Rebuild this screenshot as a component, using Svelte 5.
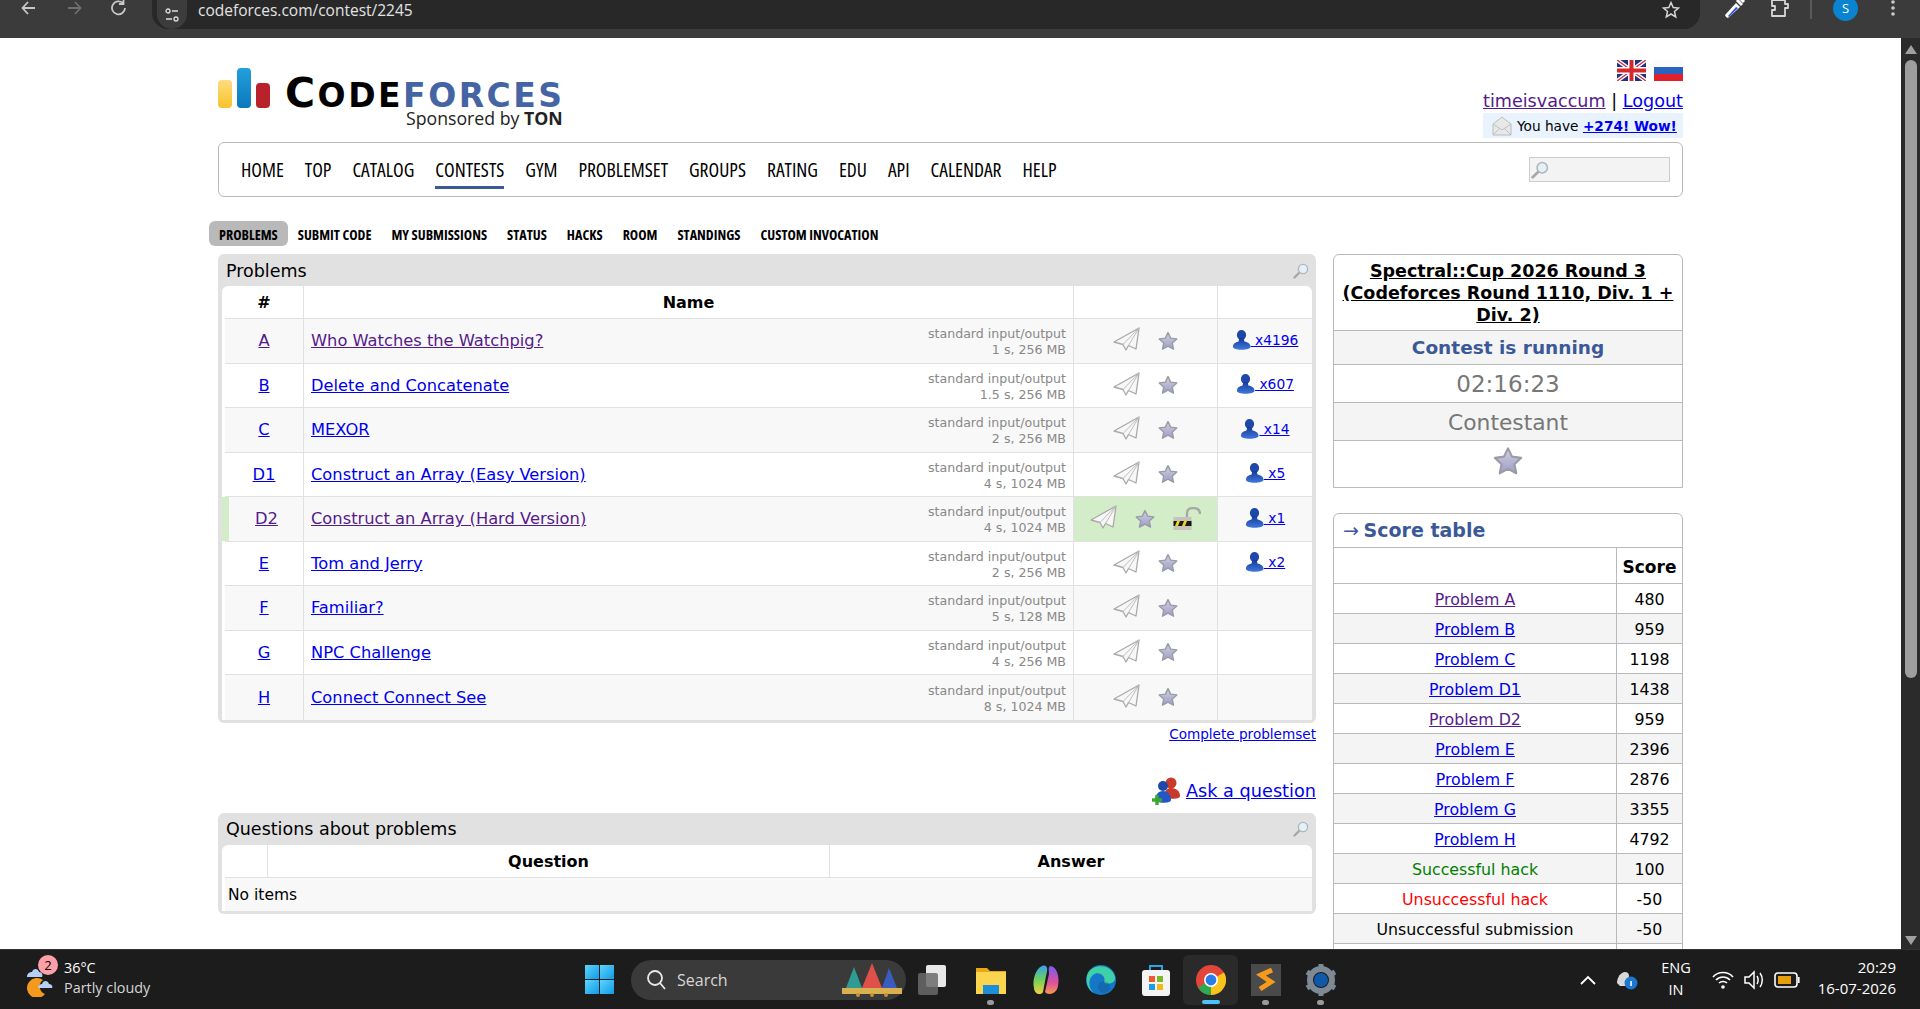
<script>
	const menu = ['HOME', 'TOP', 'CATALOG', 'CONTESTS', 'GYM', 'PROBLEMSET', 'GROUPS', 'RATING', 'EDU', 'API', 'CALENDAR', 'HELP'];
	const tabs = ['PROBLEMS', 'SUBMIT CODE', 'MY SUBMISSIONS', 'STATUS', 'HACKS', 'ROOM', 'STANDINGS', 'CUSTOM INVOCATION'];
	const problems = [
		{ id: 'A', name: 'Who Watches the Watchpig?', limits: '1 s, 256 MB', solved: 'x4196', visited: true },
		{ id: 'B', name: 'Delete and Concatenate', limits: '1.5 s, 256 MB', solved: 'x607' },
		{ id: 'C', name: 'MEXOR', limits: '2 s, 256 MB', solved: 'x14' },
		{ id: 'D1', name: 'Construct an Array (Easy Version)', limits: '4 s, 1024 MB', solved: 'x5' },
		{ id: 'D2', name: 'Construct an Array (Hard Version)', limits: '4 s, 1024 MB', solved: 'x1', visited: true, accepted: true },
		{ id: 'E', name: 'Tom and Jerry', limits: '2 s, 256 MB', solved: 'x2' },
		{ id: 'F', name: 'Familiar?', limits: '5 s, 128 MB' },
		{ id: 'G', name: 'NPC Challenge', limits: '4 s, 256 MB' },
		{ id: 'H', name: 'Connect Connect See', limits: '8 s, 1024 MB' }
	];
	const scores = [
		{ label: 'Problem A', score: 480, visited: true },
		{ label: 'Problem B', score: 959 },
		{ label: 'Problem C', score: 1198 },
		{ label: 'Problem D1', score: 1438 },
		{ label: 'Problem D2', score: 959, visited: true },
		{ label: 'Problem E', score: 2396 },
		{ label: 'Problem F', score: 2876 },
		{ label: 'Problem G', score: 3355 },
		{ label: 'Problem H', score: 4792 },
		{ label: 'Successful hack', score: 100, kind: 'good' },
		{ label: 'Unsuccessful hack', score: -50, kind: 'bad' },
		{ label: 'Unsuccessful submission', score: -50, kind: 'plain' },
		{ label: '', score: '', kind: 'plain' }
	];
</script>

{#snippet star(size)}
	<svg width={size} height={size} viewBox="0 0 20 20">
		<polygon points="10,1.6 12.7,7.1 18.8,7.9 14.3,12.1 15.5,18.2 10,15.2 4.5,18.2 5.7,12.1 1.2,7.9 7.3,7.1" fill="url(#starFill)" stroke="#9a9aa8" stroke-width="1.4" stroke-linejoin="round" />
	</svg>
{/snippet}

{#snippet plane()}
	<svg class="plane" width="27" height="24" viewBox="0 0 27 24">
		<path d="M26 1 L1 15 L10 17.5 L13 23 L15.5 18.5 L23 22 Z" fill="#f7f7f7" stroke="#a9a9a9" stroke-width="1.3" stroke-linejoin="round" />
		<path d="M26 1 L10 17.5 M26 1 L15.5 18.5" fill="none" stroke="#bdbdbd" />
	</svg>
{/snippet}

{#snippet person()}
	<svg width="19" height="20" viewBox="0 0 19 20">
		<ellipse cx="9.5" cy="5" rx="4.6" ry="5" fill="#1d47a8" />
		<path d="M7.2 8 h4.600 l.6 3.600 c3.600 .6 6.100 2.500 6.100 5.200 c0 2 -4 3 -8.800 3 S.9 18.800 .9 16.800 c0 -2.700 2.300 -4.600 5.700 -5.200 z" fill="url(#personFill)" />
	</svg>
{/snippet}

{#snippet lock()}
	<svg width="28" height="24" viewBox="0 0 28 24">
		<path d="M14 12 V6 C14 2 17 1 20 1 C24 1 27 3 27 7" fill="none" stroke="#a8a8a8" stroke-width="2.400" />
		<rect x="0.500" y="10" width="18" height="13" fill="#c4c4bc" />
		<rect x="0.500" y="14" width="18" height="5" fill="#1a1a10" />
		<path d="M2 19 l2 -5 h3 l-2 5 z M9 19 l2 -5 h3 l-2 5 z" fill="#f0d020" />
	</svg>
{/snippet}

{#snippet glass(size)}
	<svg width={size} height={size} viewBox="0 0 16 16">
		<path d="M6.500 9.500 L1.500 14.500" stroke="#a8a8a8" stroke-width="2.400" stroke-linecap="round" />
		<circle cx="10" cy="6" r="4.600" fill="#e4f1f8" stroke="#b0b8bc" stroke-width="1.400" />
	</svg>
{/snippet}

<svg class="defs" width="0" height="0" aria-hidden="true">
	<defs>
		<linearGradient id="starFill" x1="0" y1="0" x2="0" y2="1">
			<stop offset="0" stop-color="#d2d2de" />
			<stop offset="1" stop-color="#9c9cc8" />
		</linearGradient>
		<linearGradient id="personFill" x1="0" y1="0" x2="0" y2="1">
			<stop offset="0" stop-color="#163a98" />
			<stop offset="1" stop-color="#3f78de" />
		</linearGradient>
		<linearGradient id="winFill" x1="0" y1="0" x2="1" y2="1">
			<stop offset="0" stop-color="#5fd4fb" />
			<stop offset="1" stop-color="#0f9be8" />
		</linearGradient>
	</defs>
</svg>

<div class="screen">
	<div class="browser-bar">
		<div class="nav-buttons">
			<svg width="20" height="20" viewBox="0 0 20 20"><path d="M16 10 H4 M9 4 L3.500 10 L9 16" fill="none" stroke="#c7c7c7" stroke-width="1.800" /></svg>
			<svg width="20" height="20" viewBox="0 0 20 20"><path d="M4 10 H16 M11 4 L16.500 10 L11 16" fill="none" stroke="#6f6f6f" stroke-width="1.800" /></svg>
			<svg width="20" height="20" viewBox="0 0 20 20"><path d="M16 10 A6.500 6.500 0 1 1 13.800 5 M14.500 1.500 V6 H10" fill="none" stroke="#c7c7c7" stroke-width="1.800" /></svg>
		</div>
		<div class="omnibox">
			<span class="site-info">
				<svg width="16" height="16" viewBox="0 0 16 16"><circle cx="4" cy="4" r="2" fill="none" stroke="#ddd" stroke-width="1.300" /><path d="M8 4 H14 M2 12 H8" stroke="#ddd" stroke-width="1.400" /><circle cx="12" cy="12" r="2" fill="none" stroke="#ddd" stroke-width="1.300" /></svg>
			</span>
			<span class="url">codeforces.com/contest/2245</span>
			<svg class="bookmark" width="20" height="20" viewBox="0 0 20 20"><polygon points="10,2.500 12.200,7.500 17.500,8 13.500,11.500 14.700,17 10,14 5.300,17 6.500,11.500 2.500,8 7.800,7.500" fill="none" stroke="#d5d5d5" stroke-width="1.500" /></svg>
		</div>
		<div class="extensions">
			<svg width="24" height="24" viewBox="0 0 24 24"><path d="M4 21 L3 19 L14 7 L18 11 L6 22 Z" fill="#fff" /><path d="M6 20 L14 11 L16 12 L7 21 Z" fill="#2f55d4" /><path d="M15 4 L20 9 M18 2 L22 6" stroke="#fff" stroke-width="3" /></svg>
			<svg width="22" height="22" viewBox="0 0 22 22"><path d="M3 3 H16 V7 H19 V11 H16 V19 H3 V13 H6 V9 H3 Z" fill="none" stroke="#d5d5d5" stroke-width="1.800" stroke-linejoin="round" /></svg>
			<span class="bar-sep"></span>
			<span class="avatar">S</span>
			<svg width="6" height="20" viewBox="0 0 6 20"><circle cx="3" cy="4" r="1.800" fill="#ccc" /><circle cx="3" cy="10" r="1.800" fill="#ccc" /><circle cx="3" cy="16" r="1.800" fill="#ccc" /></svg>
		</div>
	</div>

	<div class="viewport">
		<div class="page">
			<header class="header">
				<div class="logo">
					<div class="logo-bars">
						<span class="bar-yellow"></span>
						<span class="bar-blue"></span>
						<span class="bar-red"></span>
					</div>
					<div class="logo-text">
						<div class="logo-name"><b class="big">C</b><b>ODE</b><b class="forces">FORCES</b></div>
						<div class="logo-sub">Sponsored by <b>TON</b></div>
					</div>
				</div>
				<div class="lang-info">
					<div class="flags">
						<svg width="29" height="21" viewBox="0 0 29 21">
							<rect width="29" height="21" fill="#26307c" />
							<path d="M0 0 L29 21 M29 0 L0 21" stroke="#fff" stroke-width="4" />
							<path d="M0 0 L29 21 M29 0 L0 21" stroke="#c9354a" stroke-width="1.400" />
							<path d="M14.500 0 V21 M0 10.500 H29" stroke="#fff" stroke-width="7" />
							<path d="M14.500 0 V21 M0 10.500 H29" stroke="#d8262e" stroke-width="4" />
						</svg>
						<svg width="29" height="21" viewBox="0 0 29 21">
							<rect width="29" height="7" fill="#fbfbfb" />
							<rect y="7" width="29" height="7" fill="#2a62c0" />
							<rect y="14" width="29" height="7" fill="#e0202a" />
						</svg>
					</div>
					<div class="user-links"><a class="visited" href="#top">timeisvaccum</a> | <a href="#top">Logout</a></div>
					<div class="talk">
						<svg width="20" height="20" viewBox="0 0 20 20"><path d="M1 8 L10 1 L19 8 V19 H1 Z" fill="#e8e8e8" stroke="#bbb" /><path d="M1 8 L10 14 L19 8 M1 19 L8 12 M19 19 L12 12" fill="none" stroke="#c0c0c0" /></svg>
						<span>You have <a href="#top"><b>+274! Wow!</b></a></span>
					</div>
				</div>
			</header>

			<nav class="menu">
				<div class="menu-items">
					{#each menu as item}
						<span class="menu-item" class:current={item === 'CONTESTS'}>{item}</span>
					{/each}
				</div>
				<div class="search">{@render glass(18)}</div>
			</nav>

			<div class="tabs">
				{#each tabs as tab, i}
					<span class="tab" class:active={i === 0}>{tab}</span>
				{/each}
			</div>

			<div class="columns">
				<main class="left">
					<section class="datatable">
						<div class="caption"><span>Problems</span>{@render glass(16)}</div>
						<div class="inner">
							<div class="row head">
								<div class="cell center">#</div>
								<div class="cell center">Name</div>
								<div class="cell"></div>
								<div class="cell last"></div>
							</div>
							{#each problems as p, i}
								<div class="row" class:odd={i % 2 === 0}>
									<div class="cell center index" class:accepted={p.accepted}>
										<a class:visited={p.visited} href="#top">{p.id}</a>
									</div>
									<div class="cell name">
										<a class:visited={p.visited} href="#top">{p.name}</a>
										<div class="limits">standard input/output<br />{p.limits}</div>
									</div>
									<div class="cell actions" class:accepted-cell={p.accepted}>
										{@render plane()}
										{@render star(20)}
										{#if p.accepted}
											{@render lock()}
										{/if}
									</div>
									<div class="cell last solved">
										{#if p.solved}
											{@render person()}<a href="#top">&nbsp;{p.solved}</a>
										{/if}
									</div>
								</div>
							{/each}
						</div>
					</section>

					<div class="complete"><a href="#top">Complete problemset</a></div>

					<div class="ask">
						<svg width="30" height="30" viewBox="0 0 30 30">
							<circle cx="20" cy="7" r="5.500" fill="#c83a2a" />
							<path d="M13 21 C13 14 17 12 20 12 C25 12 29 15 29 20 C29 23 22 24 13 21 Z" fill="#c83a2a" />
							<circle cx="12" cy="10" r="5" fill="#1d47a8" />
							<path d="M4 25 C4 18 8 15 12 15 C17 15 20 19 20 24 C20 27 10 28 4 25 Z" fill="#2456c4" />
							<path d="M6 19 V29 M1 24 H11" stroke="#3aa82e" stroke-width="3.400" />
						</svg>
						<a href="#top">Ask a question</a>
					</div>

					<section class="datatable questions">
						<div class="caption"><span>Questions about problems</span>{@render glass(16)}</div>
						<div class="inner">
							<div class="row head qrow">
								<div class="cell"></div>
								<div class="cell center">Question</div>
								<div class="cell center last">Answer</div>
							</div>
							<div class="row odd empty"><div class="cell">No items</div></div>
						</div>
					</section>
				</main>

				<aside class="side">
					<div class="round-box">
						<div class="info-title"><a href="#top">Spectral::Cup 2026 Round 3 (Codeforces Round 1110, Div. 1 + Div. 2)</a></div>
						<div class="info-row shaded status">Contest is running</div>
						<div class="info-row grey timer">02:16:23</div>
						<div class="info-row shaded grey role">Contestant</div>
						<div class="info-row star-row">{@render star(30)}</div>
					</div>

					<div class="round-box score-box">
						<div class="score-caption"><span class="arrow">→</span> Score table</div>
						<div class="score-row score-head">
							<div></div>
							<div>Score</div>
						</div>
						{#each scores as s, i}
							<div class="score-row" class:shaded={i % 2 === 1}>
								<div class={s.kind}>
									{#if s.kind}{s.label}{:else}<a class:visited={s.visited} href="#top">{s.label}</a>{/if}
								</div>
								<div>{s.score}</div>
							</div>
						{/each}
					</div>
				</aside>
			</div>
		</div>

		<div class="scrollbar">
			<span class="tri up"></span>
			<span class="thumb"></span>
			<span class="tri down"></span>
		</div>
	</div>

	<footer class="taskbar">
		<div class="weather">
			<div class="weather-icon">
				<svg width="30" height="34" viewBox="0 0 30 34">
					<path d="M18 17 A10 10 0 1 0 20 31 A8 8 0 0 1 18 17 Z" fill="#f39a1e" />
					<path d="M2 14 C2 10 5 9 7 9 C8 5 13 5 14 9 C17 9 18 12 17 14 Z" fill="#b5d0f4" />
					<path d="M13 25 C13 22 16 21 17 21 C18 17 23 17 24 21 C27 21 28 24 27 25 Z" fill="#b5d0f4" />
				</svg>
				<span class="badge">2</span>
			</div>
			<div class="weather-text">
				<div>36°C</div>
				<div class="muted">Partly cloudy</div>
			</div>
		</div>

		<div class="task-center">
			<svg class="win" width="29" height="29" viewBox="0 0 29 29">
				<rect width="14" height="14" fill="url(#winFill)" />
				<rect x="15" width="14" height="14" fill="url(#winFill)" />
				<rect y="15" width="14" height="14" fill="url(#winFill)" />
				<rect x="15" y="15" width="14" height="14" fill="url(#winFill)" />
			</svg>
			<div class="task-search">
				<svg width="22" height="22" viewBox="0 0 22 22"><circle cx="10" cy="9" r="7" fill="none" stroke="#e8e8e8" stroke-width="1.800" /><path d="M15 14 L20 20" stroke="#e8e8e8" stroke-width="1.800" /></svg>
				<span>Search</span>
				<svg class="temple" width="64" height="34" viewBox="0 0 64 34">
					<polygon points="14,4 6,25 22,25" fill="#2f9c94" />
					<polygon points="32,0 22,25 42,25" fill="#e0504a" />
					<polygon points="49,5 42,25 57,25" fill="#3a5cc0" />
					<rect x="2" y="25" width="60" height="6" fill="#d8b050" />
					<circle cx="18" cy="32" r="2" fill="#c89030" /><circle cx="32" cy="32" r="2" fill="#c89030" /><circle cx="46" cy="32" r="2" fill="#c89030" />
				</svg>
			</div>
			<div class="app">
				<svg width="30" height="30" viewBox="0 0 30 30"><rect x="8" y="0" width="20" height="22" rx="2" fill="#e8e8e8" /><rect x="0" y="8" width="20" height="22" rx="2" fill="#6a6a6a" opacity=".85" /></svg>
			</div>
			<div class="app dot">
				<svg width="32" height="32" viewBox="0 0 32 32"><path d="M1 4 H12 L15 7 H31 V30 H1 Z" fill="#e7a814" /><rect x="1" y="8" width="30" height="22" fill="#fcd54e" /><rect x="8" y="21" width="16" height="9" fill="#1d8fd8" /></svg>
			</div>
			<div class="app">
				<svg width="30" height="32" viewBox="0 0 30 32"><path d="M11 2 C17 0 17 6 15 12 L12 28 C10 32 3 30 3 24 C1 16 5 4 11 2 Z" fill="url(#copilotA)" /><path d="M19 2 C26 2 29 14 27 22 C26 30 17 32 14 28 L18 10 C18 6 17 4 19 2 Z" fill="url(#copilotB)" />
					<defs>
						<linearGradient id="copilotA" x1="0" y1="0" x2="0" y2="1"><stop offset="0" stop-color="#36a3e8" /><stop offset=".5" stop-color="#6fd05a" /><stop offset="1" stop-color="#f4d03f" /></linearGradient>
						<linearGradient id="copilotB" x1="0" y1="0" x2="0" y2="1"><stop offset="0" stop-color="#7a5cf0" /><stop offset=".6" stop-color="#e0509a" /><stop offset="1" stop-color="#f59a50" /></linearGradient>
					</defs>
				</svg>
			</div>
			<div class="app">
				<svg width="32" height="32" viewBox="0 0 32 32"><circle cx="16" cy="16" r="15" fill="#1477c8" /><path d="M3 9 C8 0 26 -1 30 13 C31 20 22 21 19 18 C22 12 13 6 8 11 C3 15 3 24 9 29 C2 26 0 16 3 9 Z" fill="#3fd0a8" /><circle cx="19" cy="23" r="6" fill="#1c1c1c" opacity=".15" /></svg>
			</div>
			<div class="app">
				<svg width="30" height="34" viewBox="0 0 30 34"><path d="M9 8 V3 H21 V8" fill="none" stroke="#2ba4e8" stroke-width="2" /><rect x="1" y="7" width="28" height="26" rx="3" fill="#f4f4f4" /><rect x="8" y="13" width="6" height="6" fill="#f05a30" /><rect x="16" y="13" width="6" height="6" fill="#7ab828" /><rect x="8" y="21" width="6" height="6" fill="#1e9ce8" /><rect x="16" y="21" width="6" height="6" fill="#f4b81c" /></svg>
			</div>
			<div class="app running">
				<svg width="30" height="30" viewBox="0 0 30 30">
					<circle cx="15" cy="15" r="15" fill="#e2453a" />
					<path d="M15 15 L2 22.500 A15 15 0 0 0 15 30 Z" fill="#2fa84f" />
					<path d="M15 15 L15 30 A15 15 0 0 0 28 7.500 Z" fill="#f7c41c" />
					<circle cx="15" cy="15" r="7" fill="#fff" />
					<circle cx="15" cy="15" r="5.400" fill="#2a7de8" />
				</svg>
				<span class="run-mark"></span>
			</div>
			<div class="app dot">
				<svg width="30" height="32" viewBox="0 0 30 32"><rect width="30" height="32" fill="#4a4a4a" /><path d="M21 6 L10 11 L20 18 L9 25" fill="none" stroke="#f49b1c" stroke-width="5" /></svg>
			</div>
			<div class="app dot">
				<svg width="32" height="32" viewBox="0 0 32 32"><circle cx="16" cy="16" r="11" fill="none" stroke="#7d8a96" stroke-width="6" /><circle cx="16" cy="16" r="7" fill="#1058a8" /><path d="M16 0 V6 M16 26 V32 M2 8 L7 11 M25 21 L30 24 M2 24 L7 21 M25 11 L30 8" stroke="#7d8a96" stroke-width="5" /></svg>
			</div>
		</div>

		<div class="tray">
			<svg width="16" height="10" viewBox="0 0 16 10"><path d="M1 9 L8 2 L15 9" fill="none" stroke="#fff" stroke-width="1.800" /></svg>
			<svg class="onedrive" width="22" height="22" viewBox="0 0 22 22"><path d="M1 14 C1 8 5 3 9 3 C12 3 13 5 13 7 L13 17 H4 Z" fill="#d8d8d8" /><circle cx="15" cy="14" r="6.500" fill="#1a78d0" /><rect x="14.300" y="12" width="1.500" height="5" fill="#fff" /></svg>
			<div class="lang">ENG<br />IN</div>
			<div class="tray-icons">
				<svg width="22" height="20" viewBox="0 0 22 20"><path d="M1 7 C6 1 16 1 21 7 M4 10 C8 6 14 6 18 10 M7 13 C9 11 13 11 15 13" fill="none" stroke="#fff" stroke-width="1.700" /><circle cx="11" cy="17" r="1.800" fill="#fff" /></svg>
				<svg width="22" height="22" viewBox="0 0 22 22"><path d="M2 8 H6 L11 3 V19 L6 14 H2 Z" fill="none" stroke="#fff" stroke-width="1.500" /><path d="M14 7 C15.500 9 15.500 13 14 15 M17 4 C20 8 20 14 17 18" fill="none" stroke="#fff" stroke-width="1.500" /></svg>
				<svg width="26" height="16" viewBox="0 0 26 16"><rect x="1" y="1" width="22" height="14" rx="3" fill="none" stroke="#fff" stroke-width="1.600" /><rect x="4" y="4" width="13" height="8" fill="#e6a00e" /><rect x="24" y="5" width="1.600" height="6" fill="#fff" /></svg>
			</div>
			<div class="clock">20:29<br />16-07-2026</div>
		</div>
	</footer>
</div>

<style>
	:global(body) {
		margin: 0;
		background: #ffffff;
	}

	.defs {
		position: absolute;
	}

	.screen {
		display: flex;
		flex-direction: column;
		width: 1920px;
		height: 1009px;
		overflow: hidden;
		font-family: 'DejaVu Sans', Verdana, sans-serif;
		color: #000000;
	}

	a {
		color: #0000ee;
	}

	a.visited {
		color: #551a8b;
	}

	.browser-bar {
		display: flex;
		align-items: flex-start;
		flex: 0 0 38px;
		background: #3b3b3b;
	}

	.nav-buttons {
		display: flex;
		gap: 25px;
		width: 152px;
		box-sizing: border-box;
		padding-left: 19px;
		margin-top: -2px;
	}

	.omnibox {
		display: flex;
		align-items: center;
		box-sizing: border-box;
		width: 1548px;
		height: 29px;
		padding: 0 19px 10px 5px;
		border-radius: 0 0 16px 16px;
		background: #282828;
	}

	.site-info {
		display: flex;
		align-items: center;
		justify-content: center;
		width: 30px;
		height: 29px;
		margin-bottom: -10px;
		border-radius: 0 0 15px 15px;
		background: #3c3c3c;
	}

	.url {
		flex: 1;
		margin-left: 11px;
		font-family: 'Open Sans', sans-serif;
		font-size: 15.500px;
		color: #e3e3e3;
	}

	.extensions {
		display: flex;
		align-items: center;
		width: 220px;
		height: 24px;
		margin-top: -4px;
		padding-left: 22px;
		box-sizing: border-box;
	}

	.extensions svg:nth-child(2) {
		margin-left: 23px;
	}

	.bar-sep {
		width: 2px;
		height: 22px;
		margin-left: 19px;
		background: #5a5a5a;
	}

	.avatar {
		display: flex;
		align-items: center;
		justify-content: center;
		width: 25px;
		height: 25px;
		margin: 0 32px 0 21px;
		border-radius: 50%;
		background: #0a84d0;
		font-family: 'Open Sans', sans-serif;
		font-size: 13px;
		color: #ffffff;
	}

	.viewport {
		display: flex;
		flex: 1;
		min-height: 0;
		overflow: hidden;
	}

	.page {
		flex: 1;
		min-width: 0;
		padding-left: 218px;
		box-sizing: border-box;
	}

	.page > * {
		width: 1465px;
	}

	.header {
		display: flex;
		justify-content: space-between;
		box-sizing: border-box;
		height: 104px;
		padding-top: 22px;
	}

	.logo {
		display: flex;
		align-items: flex-start;
		gap: 15px;
		padding-top: 8px;
	}

	.logo-bars {
		display: flex;
		align-items: flex-end;
		gap: 5px;
		height: 40px;
	}

	.logo-bars span {
		width: 14px;
		border-radius: 4px;
	}

	.bar-yellow {
		height: 28px;
		background: linear-gradient(#fddc80, #f7c22a);
	}

	.bar-blue {
		height: 40px;
		background: linear-gradient(#22a0dc, #0c78bc);
	}

	.bar-red {
		height: 25px;
		background: #b9222a;
	}

	.logo-text {
		display: flex;
		flex-direction: column;
		align-items: flex-end;
		margin-top: 9px;
	}

	.logo-name {
		height: 32px;
		font-family: 'DejaVu Sans', sans-serif;
		font-size: 33px;
		line-height: 33px;
		letter-spacing: 2.500px;
		color: #000000;
		white-space: nowrap;
	}

	.logo-name b {
		line-height: 33px;
	}

	.logo-name .big {
		font-size: 41px;
	}

	.forces {
		color: #4464a4;
	}

	.logo-sub {
		margin-right: 2px;
		font-family: 'Open Sans', sans-serif;
		font-size: 17.700px;
		line-height: 18px;
		color: #222222;
	}

	.lang-info {
		display: flex;
		flex-direction: column;
		align-items: flex-end;
	}

	.flags {
		display: flex;
		gap: 8px;
		height: 31px;
	}

	.user-links {
		height: 25px;
		font-size: 17.600px;
		line-height: 21px;
	}

	.talk {
		display: flex;
		align-items: center;
		box-sizing: border-box;
		width: 200px;
		height: 25px;
		margin-top: -3px;
		padding-left: 9px;
		background: #e8f3fd;
		white-space: nowrap;
	}

	.talk span {
		margin-left: 5px;
		padding-top: 1px;
		font-size: 13.700px;
	}

	.menu {
		display: flex;
		align-items: center;
		justify-content: space-between;
		box-sizing: border-box;
		height: 55px;
		padding: 0 12px 0 22px;
		border: 1px solid #b9b9b9;
		border-radius: 6px;
	}

	.menu-items {
		display: flex;
		gap: 21px;
		align-self: stretch;
	}

	.menu-item {
		box-sizing: border-box;
		height: 46px;
		padding-top: 15px;
		border-bottom: 3px solid transparent;
		font-family: 'Open Sans', sans-serif;
		font-stretch: 75%;
		font-size: 19.600px;
		line-height: 24px;
		white-space: nowrap;
	}

	.menu-item.current {
		border-bottom-color: #3b5998;
	}

	.search {
		display: flex;
		align-items: center;
		box-sizing: border-box;
		width: 141px;
		height: 25px;
		padding-left: 1px;
		border: 1px solid #cccccc;
		background: #f3f3f3;
	}

	.tabs {
		display: flex;
		gap: 0;
		box-sizing: border-box;
		height: 25px;
		margin: 24px 0 8px -9px;
	}

	.tab {
		padding: 0 10px;
		border-radius: 6px;
		font-family: 'Open Sans', sans-serif;
		font-stretch: 75%;
		font-size: 14.100px;
		font-weight: 700;
		line-height: 28px;
		white-space: nowrap;
	}

	.tab.active {
		background: #b9b9b9;
	}

	.columns {
		display: flex;
		gap: 17px;
		align-items: flex-start;
	}

	.left {
		width: 1098px;
		flex: none;
	}

	.datatable {
		box-sizing: border-box;
		padding: 0 4px 3px;
		border-radius: 6px;
		background: #e1e1e1;
	}

	.caption {
		display: flex;
		align-items: center;
		justify-content: space-between;
		box-sizing: border-box;
		height: 32px;
		padding: 1px 3px 0 4px;
		font-size: 17.500px;
	}

	.inner {
		box-sizing: border-box;
		padding: 0 0 0 3px;
		border-radius: 6px 6px 0 0;
		background: #ffffff;
	}

	.row {
		display: grid;
		grid-template-columns: 79px 770px 144px 1fr;
		height: 44.500px;
		border-bottom: 1px solid #e1e1e1;
		box-sizing: border-box;
		font-size: 16.300px;
	}

	.row:last-child {
		border-bottom: 0;
	}

	.row.head {
		height: 33px;
		font-weight: 700;
		font-size: 16px;
	}

	.head .cell {
		padding-top: 1px;
	}

	.row.odd {
		background: #f8f8f8;
	}

	.cell {
		display: flex;
		align-items: center;
		border-right: 1px solid #e1e1e1;
		min-width: 0;
	}

	.cell.last {
		border-right: 0;
	}

	.center {
		justify-content: center;
	}

	.index {
		box-sizing: border-box;
	}

	.index.accepted {
		padding-left: 1px;
		margin-left: -3px;
		border-left: 7px solid #d4edc9;
	}

	.name {
		justify-content: space-between;
		padding: 0 7px;
	}

	.limits {
		padding-top: 3px;
		font-size: 12.600px;
		line-height: 16px;
		text-align: right;
		color: #888888;
		white-space: nowrap;
	}

	.actions {
		justify-content: center;
		gap: 18px;
	}

	.plane {
		margin-bottom: 3px;
	}

	.accepted-cell {
		background: #d4edc9;
	}

	.solved {
		justify-content: center;
		padding-bottom: 2px;
		font-size: 13.800px;
	}

	.left > .complete,
	.left > .ask {
		width: 100%;
	}

	.complete {
		height: 48px;
		padding-top: 3px;
		box-sizing: border-box;
		text-align: right;
		font-size: 13.600px;
	}

	.ask {
		display: flex;
		align-items: center;
		justify-content: flex-end;
		gap: 5px;
		height: 33px;
		margin-top: 4px;
		margin-bottom: 5px;
		font-size: 17.700px;
	}

	.qrow {
		grid-template-columns: 43px 562px 1fr;
	}

	.row.empty {
		grid-template-columns: 1fr;
		height: 33px;
	}

	.empty .cell {
		padding: 1px 0 0 3px;
		border: 0;
		font-size: 15.500px;
	}

	.side {
		width: 350px;
		flex: none;
	}

	.round-box {
		box-sizing: border-box;
		border: 1px solid #b9b9b9;
		border-radius: 6px 6px 0 0;
	}

	.info-title {
		box-sizing: border-box;
		height: 75px;
		padding: 5px 5px 0;
		font-size: 17.500px;
		font-weight: 700;
		line-height: 22px;
		text-align: center;
	}

	.info-title a {
		color: #000000;
	}

	.info-row {
		box-sizing: border-box;
		display: flex;
		align-items: center;
		justify-content: center;
		height: 38px;
		border-top: 1px solid #b9b9b9;
	}

	.status {
		height: 34px;
		font-size: 18.500px;
		font-weight: 700;
		color: #3b5998;
	}

	.grey {
		color: #777777;
	}

	.timer {
		font-size: 23px;
	}

	.role {
		padding-top: 1px;
		font-size: 21.800px;
	}

	.shaded {
		background: #f4f4f4;
	}

	.star-row {
		height: 47px;
		padding-bottom: 6px;
	}

	.score-box {
		margin-top: 25px;
		overflow: hidden;
	}

	.score-caption {
		box-sizing: border-box;
		height: 33px;
		padding-left: 9px;
		font-size: 19px;
		font-weight: 700;
		line-height: 33px;
		color: #3b5998;
	}

	.arrow {
		margin-right: -2px;
		font-family: 'DejaVu Sans', sans-serif;
		font-size: 19px;
		font-weight: 400;
		line-height: 0;
	}

	.score-row {
		display: grid;
		grid-template-columns: 282px 1fr;
		box-sizing: border-box;
		height: 30px;
		border-top: 1px solid #b9b9b9;
		font-size: 15.800px;
		line-height: 31px;
		text-align: center;
	}

	.score-row > div + div {
		border-left: 1px solid #b9b9b9;
	}

	.score-head {
		height: 36px;
		font-size: 17px;
		font-weight: 700;
		line-height: 39px;
	}

	.good {
		color: #008000;
	}

	.bad {
		color: #ff0000;
	}

	.scrollbar {
		display: flex;
		flex: 0 0 19px;
		flex-direction: column;
		align-items: center;
		padding: 7px 0 4px;
		box-sizing: border-box;
		background: #2b2b2b;
	}

	.thumb {
		width: 12px;
		height: 618px;
		margin-top: 6px;
		border-radius: 6px;
		background: #9e9e9e;
	}

	.tri {
		width: 0;
		height: 0;
		border-left: 6px solid transparent;
		border-right: 6px solid transparent;
	}

	.tri.up {
		border-bottom: 9px solid #a0a0a0;
	}

	.tri.down {
		margin-top: auto;
		border-top: 9px solid #a0a0a0;
	}

	.taskbar {
		display: flex;
		align-items: center;
		flex: 0 0 60px;
		box-sizing: border-box;
		padding: 0 24px 0 25px;
		border-top: 1px solid #333333;
		background: #1c1c1c;
		font-family: 'Open Sans', sans-serif;
		font-size: 14.400px;
		color: #ffffff;
	}

	.weather {
		display: flex;
		align-items: center;
		gap: 9px;
		width: 560px;
		flex: none;
	}

	.weather-icon {
		position: relative;
		width: 30px;
		height: 34px;
	}

	.badge {
		position: absolute;
		top: -8px;
		left: 13px;
		width: 20px;
		height: 20px;
		border-radius: 50%;
		background: #ff9fa8;
		font-size: 13px;
		line-height: 20px;
		text-align: center;
		color: #000000;
	}

	.weather-text {
		margin-top: -3px;
		line-height: 20px;
	}

	.muted {
		color: #d6d6d6;
	}

	.task-center {
		display: flex;
		align-items: center;
		flex: none;
	}

	.win {
		margin-right: 17px;
	}

	.task-search {
		display: flex;
		align-items: center;
		box-sizing: border-box;
		width: 275px;
		height: 40px;
		padding: 0 2px 0 14px;
		border-radius: 20px;
		background: #3a3a3a;
		font-size: 16px;
		color: #d6d6d6;
	}

	.task-search span {
		flex: 1;
		margin-left: 10px;
	}

	.app {
		position: relative;
		display: flex;
		align-items: center;
		justify-content: center;
		width: 55px;
		height: 50px;
	}

	.task-search + .app {
		width: 54px;
		margin-right: 3px;
	}

	.app.dot::after {
		content: '';
		position: absolute;
		bottom: 0;
		width: 7px;
		height: 5px;
		border-radius: 3px;
		background: #9a9a9a;
	}

	.app.running {
		border-radius: 6px;
		background: #2a2a2a;
	}

	.run-mark {
		position: absolute;
		bottom: 1px;
		width: 18px;
		height: 4px;
		border-radius: 2px;
		background: #4cc2ff;
	}

	.tray {
		display: flex;
		align-items: center;
		margin-left: auto;
	}

	.onedrive {
		margin-left: 20px;
	}

	.lang {
		width: 40px;
		margin: -2px 0 0 18px;
		font-size: 14.500px;
		line-height: 22px;
		text-align: center;
	}

	.tray-icons {
		display: flex;
		align-items: center;
		gap: 9px;
		margin-left: 16px;
	}

	.clock {
		width: 90px;
		margin: -3px 0 0 6px;
		font-size: 15px;
		line-height: 21px;
		text-align: right;
	}
</style>
